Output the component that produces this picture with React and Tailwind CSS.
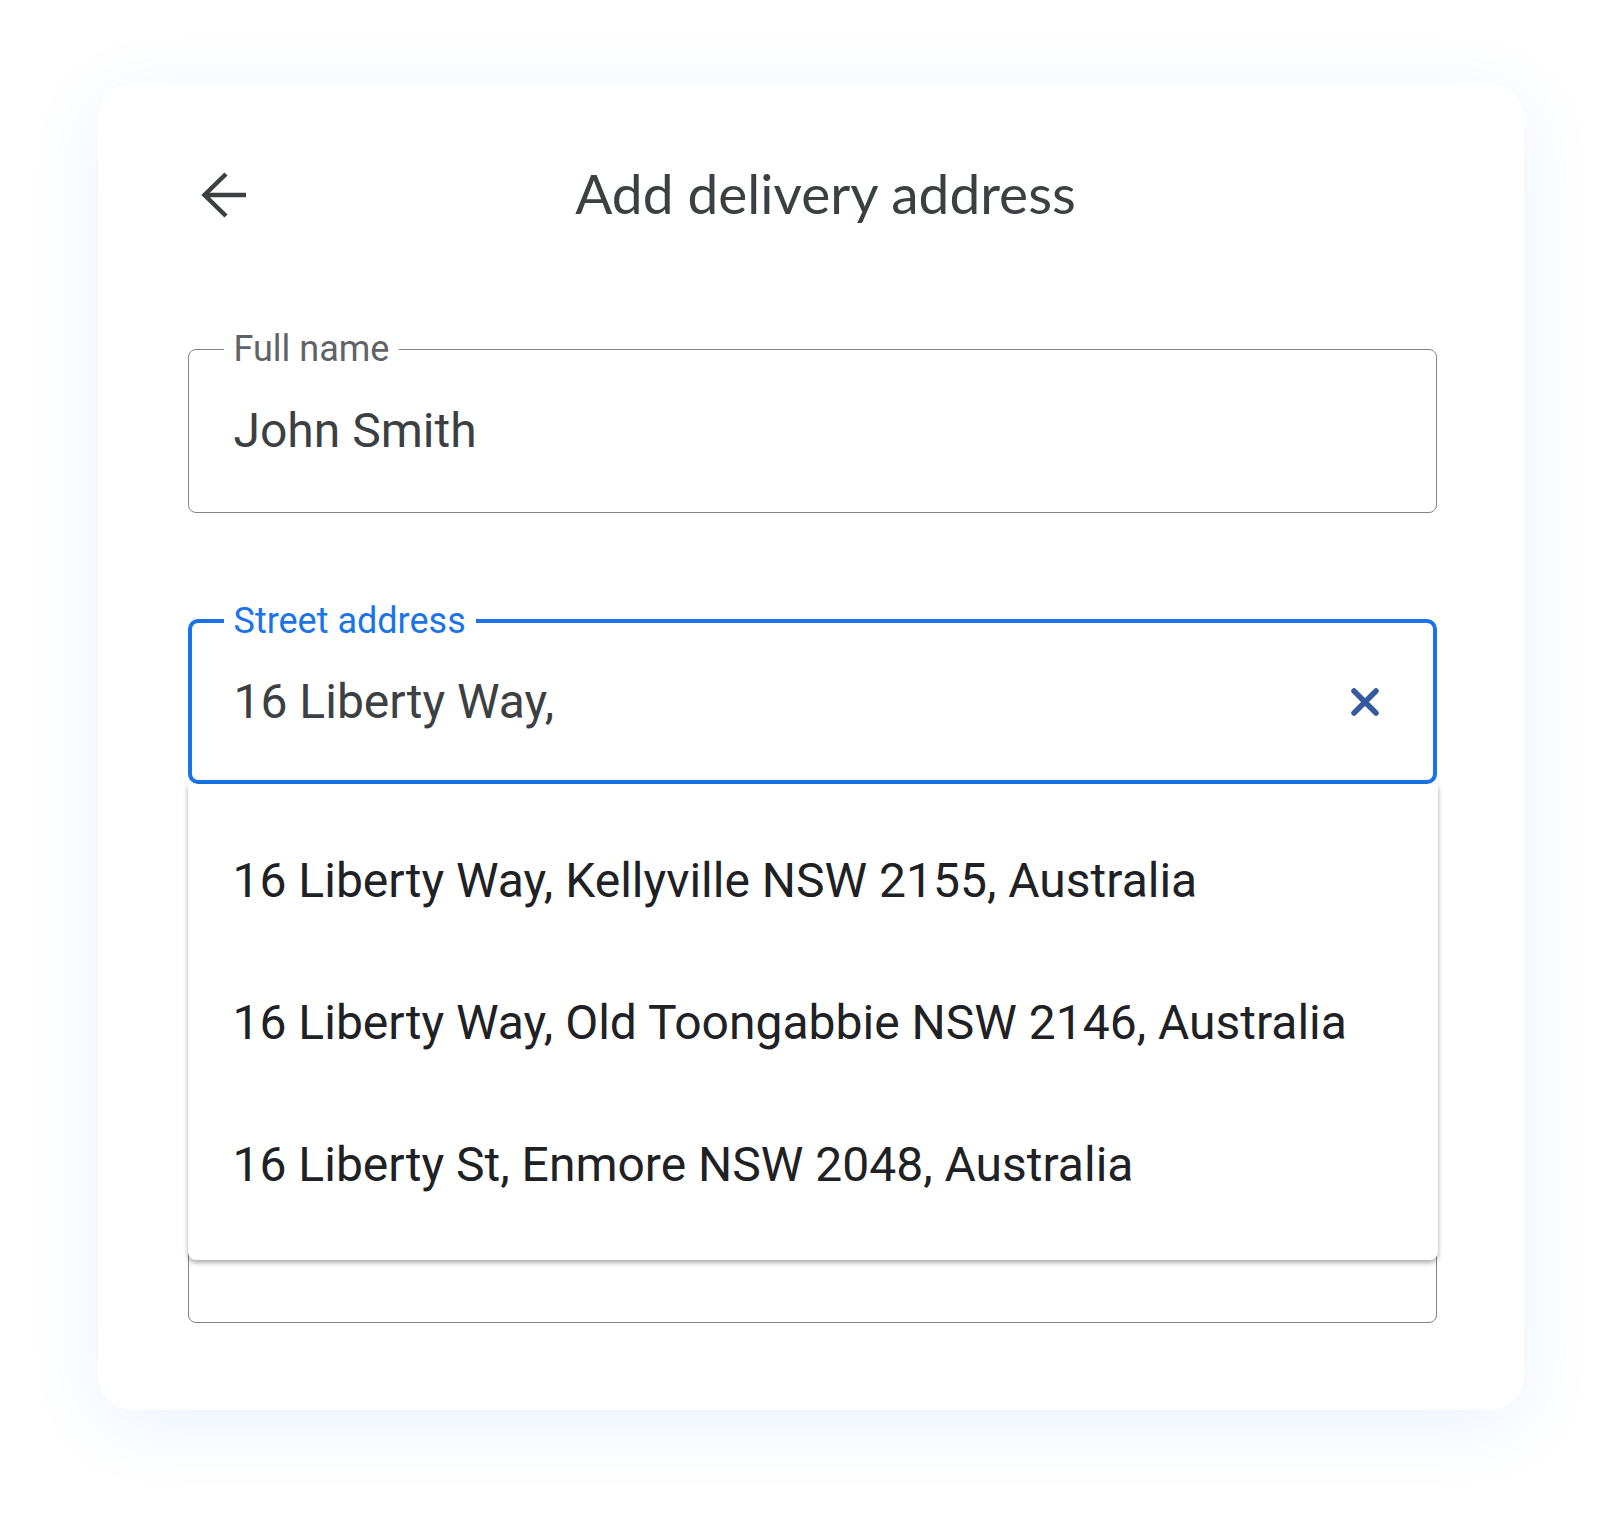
import React from 'react';

const suggestions = [
    '16 Liberty Way, Kellyville NSW 2155, Australia',
    '16 Liberty Way, Old Toongabbie NSW 2146, Australia',
    '16 Liberty St, Enmore NSW 2048, Australia',
];

const BackArrow = () => (
    <svg width="46" height="46" viewBox="0 0 46 46" fill="none">
        <path d="M45 23H4" stroke="#3c4043" strokeWidth="4.5" />
        <path d="M25 2L3.5 23L25 44" stroke="#3c4043" strokeWidth="4.5" strokeLinejoin="miter" />
    </svg>
);

const ClearIcon = () => (
    <svg width="30" height="30" viewBox="0 0 30 30" fill="none">
        <path d="M4 4L26 26M26 4L4 26" stroke="#355a9f" strokeWidth="5.5" strokeLinecap="round" />
    </svg>
);

const App = () => {
    return (
        <div className="min-h-screen w-full bg-white pt-[84px] pb-[111px] font-['Roboto',sans-serif]">
            <div className="w-[1426px] mx-auto bg-white rounded-[34px] pl-[90px] pr-[87px] pt-[65px] pb-[87px] shadow-[0_14px_70px_rgba(66,133,244,0.11)]">
                {/* header */}
                <div className="flex items-center h-[88px]">
                    <div className="ml-[13px] w-[46px] mt-[4px] flex items-center">
                        <BackArrow />
                    </div>
                    <h1 className="flex-1 text-center text-[55px] leading-none font-normal text-[#3c4043] font-['Lato',sans-serif]">
                        Add delivery address
                    </h1>
                    <div className="w-[32px]"></div>
                </div>

                {/* full name */}
                <div className="relative mt-[112px] h-[164px] border border-[#80868b] rounded-[8px] flex items-center pl-[45px]">
                    <span className="absolute left-[35px] -top-px -translate-y-1/2 bg-white px-[10px] text-[36px] leading-none text-[#5f6368]">
                        Full name
                    </span>
                    <span className="text-[48px] leading-none text-[#3c4043]">John Smith</span>
                </div>

                {/* street address */}
                <div className="relative mt-[106px] h-[165px] border-[4px] border-[#1a73e8] rounded-[10px] flex items-center justify-between pl-[42px] pr-[53px]">
                    <span className="absolute left-[32px] -top-[2px] -translate-y-1/2 bg-white px-[10px] text-[36px] leading-none text-[#1a73e8]">
                        Street address
                    </span>
                    <span className="text-[48px] leading-none text-[#3c4043]">16 Liberty Way,</span>
                    <ClearIcon />

                    <ul className="absolute z-10 top-[calc(100%+4px)] -left-[4px] -right-[5px] bg-white rounded-b-[8px] pt-[26px] pb-[24px] shadow-[0_3px_4px_rgba(0,0,0,0.28),0_0_8px_rgba(0,0,0,0.08)]">
                        {suggestions.map((s) => (
                            <li key={s} className="h-[142px] flex items-center pl-[45px] text-[48px] leading-none text-[#202124]">
                                {s}
                            </li>
                        ))}
                    </ul>
                </div>

                {/* next field, under the suggestions */}
                <div className="mt-[375px] h-[164px] border border-[#80868b] rounded-[8px]"></div>
            </div>
        </div>
    );
};

export default App;
